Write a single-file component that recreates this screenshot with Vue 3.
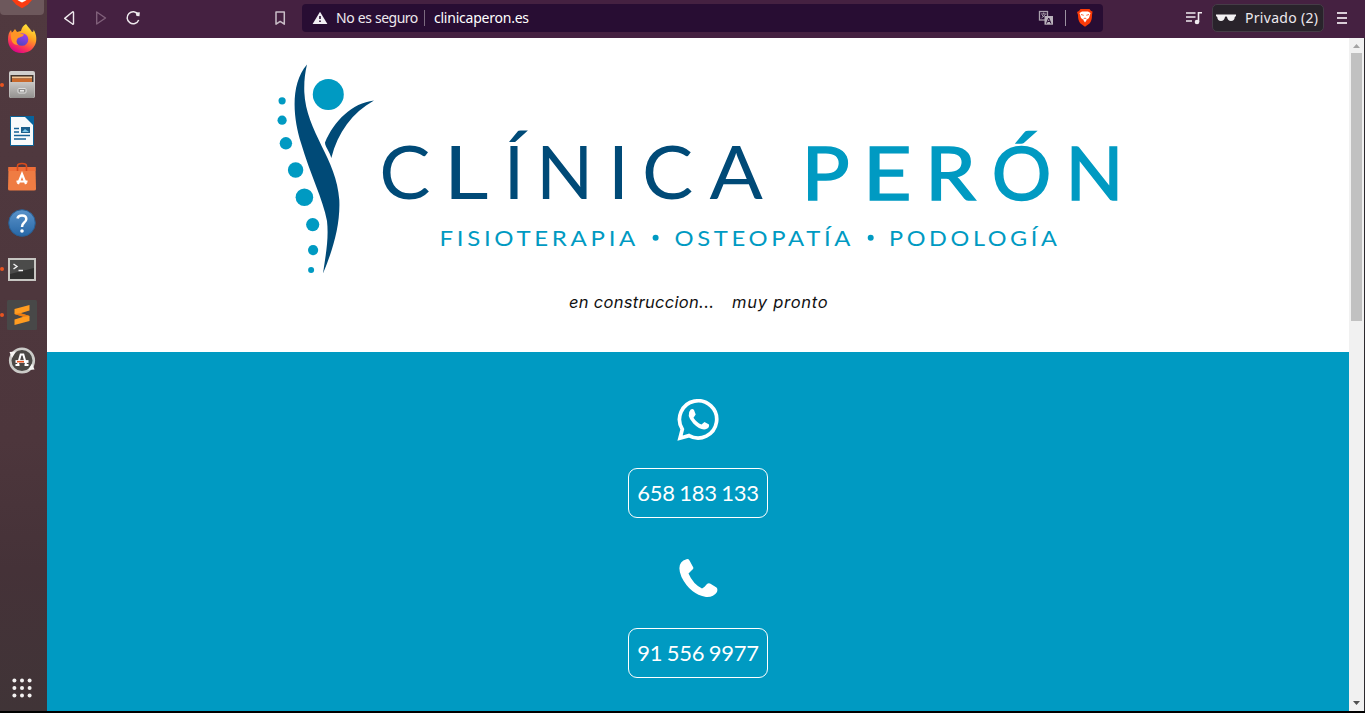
<script setup>
const vertebrae = [
  [282.1, 100.8, 3.6],
  [282.1, 120.2, 4.6],
  [285.9, 143.3, 6.2],
  [295.6, 170, 7.7],
  [304.4, 197.3, 8.8],
  [312.7, 224.6, 6.6],
  [313.1, 250.1, 5.1],
  [311.1, 270, 3],
]
// letter, x, horizontal stretch
const clinica = [
  ['C', 379.2, 1.05],
  ['L', 443.6, 1.2],
  ['Í', 503.7, 1],
  ['N', 536, 1.03],
  ['I', 608.2, 1],
  ['C', 642, 1.05],
  ['A', 709.4, 1.08],
]
const peron = [
  ['P', 801.4, 1.1],
  ['E', 862.7, 1.16],
  ['R', 924.9, 1.11],
  ['Ó', 991.8, 1.02],
  ['N', 1065.5, 1.04],
]
const place = (l, y) => `translate(${l[1]} ${y}) scale(${l[2]} 1)`
const gridDots = [0, 1, 2, 3, 4, 5, 6, 7, 8].map((i) => [14.4 + (i % 3) * 7.6, 15.4 + Math.floor(i / 3) * 7.6])
</script>

<template>
  <div class="desktop">
    <aside class="dock">
      <div class="dock-active">
        <svg width="44" height="16" viewBox="0 0 44 16">
          <path d="M12 0H32L28 4.500L22 8.200L16 4.500Z" fill="#fb3c12" />
          <path d="M17.500 0H26.500L25 1L22 2.600L19 1Z" fill="#fff" />
        </svg>
      </div>
      <!-- Firefox -->
      <svg class="app" viewBox="0 0 44 46">
        <defs>
          <linearGradient id="fox" x1="0.8" y1="0" x2="0.3" y2="1">
            <stop offset="0" stop-color="#fff33f" />
            <stop offset="0.4" stop-color="#ffa321" />
            <stop offset="0.72" stop-color="#ff3f4d" />
            <stop offset="1" stop-color="#d9008d" />
          </linearGradient>
          <linearGradient id="globe" x1="0.7" y1="0" x2="0.3" y2="1">
            <stop offset="0" stop-color="#a13ef0" />
            <stop offset="1" stop-color="#4f45bd" />
          </linearGradient>
        </defs>
        <path d="M26 8C29 12 31 14 32 16Q34 16 33.500 13.500C37 19 37 25 35 29C32 35 27 37 21.500 37C13 37 8 31 8 23.500C8 19 9 16 11 14L12 17L15 13L17 16L21 15Q22 10 26 8Z" fill="url(#fox)" />
        <circle cx="22" cy="23.500" r="6.300" fill="url(#globe)" />
        <path d="M11 17Q15 14 19 17L24 18.500C23 21 20 21 18 22C16 24 16 27 18 29Q10 29 11 17Z" fill="#ff9426" />
      </svg>
      <!-- Files -->
      <svg class="app" viewBox="0 0 44 46">
        <defs>
          <linearGradient id="drawer" x1="0" y1="0" x2="0" y2="1">
            <stop offset="0" stop-color="#c9c7c5" />
            <stop offset="1" stop-color="#93918f" />
          </linearGradient>
        </defs>
        <circle cx="2" cy="23" r="2" fill="#e95420" />
        <rect x="9" y="9" width="26" height="27" rx="2" fill="#d0cecd" />
        <rect x="10.500" y="13" width="23" height="8" fill="#42352e" />
        <rect x="12" y="14.500" width="20" height="2" fill="#f4c696" />
        <rect x="12" y="16.500" width="20" height="3.500" fill="#c9692c" />
        <path d="M9.500 20H34.500V34Q34.500 36 32.500 36H11.500Q9.500 36 9.500 34Z" fill="url(#drawer)" />
        <rect x="18" y="26.500" width="8" height="4.500" rx="1" fill="#8e8c8a" stroke="#dedede" />
        <rect x="20" y="28.200" width="4" height="1.300" fill="#fff" />
      </svg>
      <!-- Writer -->
      <svg class="app" viewBox="0 0 44 46">
        <path d="M10.500 8.500H26L33.500 16V37.500H10.500Z" fill="#f8fafb" stroke="#0b6297" />
        <path d="M24 8H34V18Z" fill="#07639c" />
        <path d="M14 20.500H19M14 24H19M14 27.500H30M14 31H26" stroke="#176397" stroke-width="1.500" />
        <rect x="21" y="19" width="9" height="6" fill="#1b5f8b" />
        <path d="M22 24L25 21L29 24" fill="#7cc4e8" />
      </svg>
      <!-- Software -->
      <svg class="app" viewBox="0 0 44 46">
        <path d="M8.500 13H35.500L36 35Q36 36.500 34 36.500H10Q8 36.500 8 35Z" fill="#ef7c43" />
        <path d="M8.500 13H35.500V17H8.400Z" fill="#ee6e38" />
        <path d="M17.500 17V12Q17.500 9.500 22 9.500T26.500 12V17" fill="none" stroke="#d64b1c" stroke-width="1.600" />
        <path d="M18 30L22 20L26 30M16.500 27.500H27.500" fill="none" stroke="#fff" stroke-width="2.200" />
      </svg>
      <!-- Help -->
      <svg class="app" viewBox="0 0 44 46">
        <defs>
          <linearGradient id="help" x1="0" y1="0" x2="0" y2="1">
            <stop offset="0" stop-color="#5b93ca" />
            <stop offset="1" stop-color="#2767a6" />
          </linearGradient>
        </defs>
        <circle cx="22" cy="23" r="13.300" fill="url(#help)" stroke="#285e93" />
        <path d="M17.500 18.500Q18 15.500 22 15.500Q26.300 15.500 26.300 19Q26.300 21 24 22.800Q22 24.500 22 27" fill="none" stroke="#fff" stroke-width="2.500" />
        <circle cx="22" cy="31" r="1.800" fill="#fff" />
      </svg>
      <!-- Terminal -->
      <svg class="app" viewBox="0 0 44 46">
        <circle cx="2" cy="23" r="2" fill="#e95420" />
        <rect x="9" y="13" width="26" height="21" fill="#30302f" stroke="#c7c6c2" stroke-width="2" />
        <path d="M10 14H34V22L10 28Z" fill="#4b4b4a" />
        <path d="M13.500 18L17 20.500L13.500 23M18.500 24.500H23" fill="none" stroke="#f2f2f2" stroke-width="1.400" />
      </svg>
      <!-- Sublime Text -->
      <svg class="app" viewBox="0 0 44 46">
        <circle cx="2" cy="23" r="2" fill="#e95420" />
        <rect x="7" y="8" width="30" height="30" rx="1.500" fill="#484848" />
        <path d="M14.500 17L29.500 13V18.500L20.500 21.300L29.500 24V29L14.500 33V27.500L23.500 24.800L14.500 22Z" fill="#ff9c20" />
        <path d="M14.500 22L20.500 21.300L29.500 24L23.500 24.800Z" fill="#ec7c10" />
      </svg>
      <!-- Updater -->
      <svg class="app" viewBox="0 0 44 46">
        <circle cx="22" cy="22.500" r="11.800" fill="#4a4845" stroke="#cbcbc8" stroke-width="2.600" />
        <path d="M9.500 14L16 13.500L12 20ZM34.500 31.500L28 32L32 25.500Z" fill="#f5f5f3" />
        <path d="M18 26L20.700 16.500H23.300L26 26M15.500 27H19.500M24.500 27H28.500" fill="none" stroke="#fff" stroke-width="2" />
        <path d="M15.500 23.500H28.500" stroke="#fff" stroke-width="2.800" />
        <path d="M17 23.700H24" stroke="#e95420" stroke-width="1.600" />
      </svg>
      <svg class="app grid-button" viewBox="0 0 44 46">
        <circle v-for="(d, i) in gridDots" :key="i" :cx="d[0]" :cy="d[1]" r="2" fill="#f4f2f2" />
      </svg>
    </aside>

    <div class="browser">
      <header class="toolbar">
        <svg class="nav" width="255" height="38" viewBox="47 0 255 38" fill="none" stroke="#eee9ed" stroke-width="1.400" stroke-linejoin="round">
          <path d="M73.500 12.300V23.700Q73.500 24.500 72.500 24L64.700 18.400L72.500 12Q73.500 11.500 73.500 12.300Z" />
          <path d="M96.700 12V24L105.500 18Z" stroke="#80607a" />
          <path d="M138.200 14.500A6 6 0 1 0 138.700 20" stroke-width="1.500" />
          <path d="M135.500 12.500L139.800 12.200L139.500 16.300L136.500 16Z" fill="#eee9ed" stroke="none" />
          <path d="M276 12H284.300V24.200L280.200 21.400L276 24.200Z" stroke="#c9bdc7" stroke-width="1.500" />
        </svg>
        <div class="address">
          <svg width="16" height="14" viewBox="0 0 16 14">
            <path d="M8 .8L15.400 13H.6Z" fill="#f2eff4" />
            <path d="M8 5V8M8 9.500V11" stroke="#280d33" stroke-width="1.600" />
          </svg>
          <span class="insecure">No es seguro</span>
          <i class="sep"></i>
          <span class="url">clinicaperon.es</span>
          <svg class="address-icons" width="62" height="28" viewBox="1036 4 62 28">
            <rect x="1039.500" y="11.500" width="8" height="8.500" fill="#280d33" stroke="#aaa0ad" stroke-width="1.300" />
            <path d="M1041 14H1046.500M1043.700 12.500V14M1041.500 18L1045.500 14.500M1042 15L1044 17" fill="none" stroke="#aaa0ad" />
            <rect x="1044.500" y="16" width="8.500" height="8.700" fill="#b9b1bb" />
            <path d="M1046.500 23.500L1048.700 18L1051 23.500M1047.500 21.500H1050" fill="none" stroke="#280d33" />
            <path d="M1065.500 10V26" stroke="#9b91a0" />
            <path d="M1080.500 9H1089.500L1091 11L1092.500 11.500L1092 15Q1092 21 1089.500 23.500L1085 26.700L1080.500 23.500Q1078 21 1078 15L1077 12L1079 11Z" fill="#fb3b08" />
            <path d="M1079.500 13L1082 11.500H1088L1090.500 13L1089 18L1087 19.500L1085 22.500L1083 19.500L1081 18Z" fill="#fff" />
            <path d="M1081 14.500L1083.700 15.300M1089 14.500L1086.300 15.300M1083.500 19L1085 18L1086.500 19" fill="none" stroke="#fb3b08" stroke-width="0.800" />
          </svg>
        </div>
        <svg class="playlist" width="18" height="16" viewBox="1185 10 18 16">
          <path d="M1186 13H1195.500M1186 17H1195.500M1186 21H1192" fill="none" stroke="#f0ebef" stroke-width="1.500" />
          <path d="M1198.500 22V12.700H1202" fill="none" stroke="#f0ebef" stroke-width="1.600" />
          <circle cx="1197" cy="22" r="2.300" fill="#f0ebef" />
        </svg>
        <div class="private">
          <svg width="20" height="8" viewBox="0 0 20 8">
            <path d="M0 .5H20V2L18.800 3Q18.500 7 15 7Q11.800 7 11 3L10 2.300L9 3Q8.200 7 5 7Q1.500 7 1.200 3L0 2Z" fill="#f3f1f3" />
          </svg>
          <span>Privado (2)</span>
        </div>
        <svg class="menu" width="10" height="12" viewBox="0 0 10 12">
          <path d="M0 1H10M0 6H10M0 11H10" stroke="#d9ced7" stroke-width="2" />
        </svg>
      </header>

      <div class="viewport">
        <main class="page">
          <section class="hero">
            <svg class="logo" width="900" height="220" viewBox="248 60 900 220">
              <g fill="#009ac2">
                <circle v-for="(v, i) in vertebrae" :key="i" :cx="v[0]" :cy="v[1]" :r="v[2]" />
                <circle cx="328.300" cy="94.500" r="15.500" />
              </g>
              <g fill="#004a77">
                <path d="M307 64.500C290 84 293 118 301 143C310 174 323 199 327 221C329 239 325.500 256 323 273.500C332 252 340.500 226 339.300 200C337 159 306 132 304.300 92C304 81 305 73 307 64.500Z" />
                <path d="M374 100.500C352 103 334 121 325 142.500C325 147 329.500 151 331.300 158C338 132 352 113 374 100.500Z" />
              </g>
              <g class="name dark"><text v-for="(l, i) in clinica" :key="i" :transform="place(l, 199.3)">{{ l[0] }}</text></g>
              <g class="name bright"><text v-for="(l, i) in peron" :key="i" :transform="place(l, 199.5)">{{ l[0] }}</text></g>
              <g class="services">
                <text x="439.500" y="245.500" textLength="199.500" lengthAdjust="spacingAndGlyphs">FISIOTERAPIA</text>
                <text x="674.500" y="245.500" textLength="179.500" lengthAdjust="spacingAndGlyphs">OSTEOPATÍA</text>
                <text x="889" y="245.500" textLength="171.500" lengthAdjust="spacingAndGlyphs">PODOLOGÍA</text>
                <circle cx="655.600" cy="237.700" r="3" />
                <circle cx="870.700" cy="237.700" r="3" />
              </g>
            </svg>
            <p class="notice"><em class="building">en construccion...</em><em class="soon">muy pronto</em></p>
          </section>
          <section class="contact">
            <svg width="42" height="42" viewBox="677 399 42 42">
              <path d="M682.300 429.200A18.600 18.600 0 1 1 689 435.600L680 438.200Z" fill="none" stroke="#fff" stroke-width="3.700" />
              <path d="M690.700 409.500Q692.700 408.300 694 410L695.700 414.500L693.500 417.700Q696.500 422.500 701.500 424.500L704.500 422L709 424.500Q709.800 428 705.500 429.300Q700 430.300 693.300 423.500Q685.500 415 690.700 409.500Z" fill="#fff" />
            </svg>
            <a class="phone">658 183 133</a>
            <svg class="handset" width="42" height="42" viewBox="677 559 42 42">
              <path d="M686.500 559.200Q688.500 558.800 689.500 560.500L693.300 567.500Q693.500 568.700 692.500 569.500L688.500 573.500Q693 584 702 588.500Q704 588 706.500 584.500Q708.500 582.500 710.500 583.700L716.500 587.500Q718 588.700 717 592Q713.500 597.500 706 597Q690 594 681.500 577Q675.500 562.500 686.500 559.200Z" fill="#fff" />
            </svg>
            <a class="phone">91 556 9977</a>
          </section>
        </main>
        <div class="scrollbar">
          <svg width="15" height="15" viewBox="0 0 15 15"><path d="M4 10L7.500 6L11 10Z" fill="#a3a3a3" /></svg>
          <div class="thumb"></div>
          <svg class="down" width="15" height="15" viewBox="0 0 15 15"><path d="M4 5L7.500 9L11 5Z" fill="#505050" /></svg>
        </div>
      </div>
    </div>
  </div>
</template>

<style>
body { margin: 0; overflow: hidden; }
</style>

<style scoped>
.desktop { width: 1365px; height: 713px; display: flex; background: #000; overflow: hidden; }
.desktop svg { display: block; flex: none; }
.dock { width: 47px; height: 711px; flex: none; display: flex; flex-direction: column; background: linear-gradient(#50393f, #4d363c 62%, #453238 80%, #403437); }
.dock-active { width: 44px; height: 15px; margin-bottom: 1px; background: #6d585c; border-radius: 0 0 4px 4px; overflow: hidden; }
.app { width: 44px; height: 46px; }
.grid-button { margin-top: auto; }
.browser { width: 1318px; height: 711px; display: flex; flex-direction: column; background: #2d2a2e; }
.toolbar { height: 38px; flex: none; display: flex; align-items: center; background: #452141; font: 14px/20px "Noto Sans", sans-serif; color: #eee9ee; white-space: nowrap; }
.address { box-sizing: border-box; width: 801px; height: 28px; margin-top: -2px; padding: 0 5px 0 10px; display: flex; align-items: center; background: #280d33; border-radius: 4px; }
.insecure { width: 82px; margin-left: 8px; letter-spacing: -0.5px; word-spacing: 0.5px; }
.sep { width: 1px; height: 16px; margin: 0 9px 0 6px; background: #7b6a80; }
.url { letter-spacing: -0.23px; color: #fff; }
.address-icons { margin-left: auto; }
.playlist { margin: -2px 0 0 82px; }
.private { box-sizing: border-box; width: 112px; height: 28px; margin: -2px 0 0 9px; padding-left: 3px; display: flex; align-items: center; background: #29232b; border: 1px solid #453c47; border-radius: 5px; }
.private span { margin-left: 9px; letter-spacing: 0.3px; }
.menu { margin: -2px 0 0 13px; }
.viewport { height: 673px; display: flex; }
.page { width: 1302px; }
.hero { height: 314px; background: #fff; display: flex; flex-direction: column; align-items: center; padding-top: 22px; box-sizing: border-box; }
.name { font: 400 73px "Lato", sans-serif; }
.dark { fill: #004a77; }
.bright { fill: #009ac2; stroke: #009ac2; stroke-width: 1.5px; }
.services { font: 400 21.5px "Lato", sans-serif; letter-spacing: 3.3px; fill: #009ac2; }
.notice { display: flex; gap: 17px; margin: 10px 0 0; padding-left: 2px; font: italic 16.5px/24px "Inter", sans-serif; color: #111; white-space: pre; }
.building { width: 146px; letter-spacing: 0.3px; }
.soon { width: 97px; letter-spacing: 0.75px; }
.contact { box-sizing: border-box; height: 359px; padding-top: 47px; display: flex; flex-direction: column; align-items: center; background: #009ac2; }
.phone { box-sizing: border-box; width: 140px; height: 50px; margin-top: 27px; border: 1px solid #fff; border-radius: 9px; color: #fff; font: 22px/48px "Lato", sans-serif; letter-spacing: -0.3px; word-spacing: -0.7px; text-align: center; white-space: nowrap; }
.handset { margin-top: 41px; }
.scrollbar { width: 15px; height: 673px; display: flex; flex-direction: column; align-items: center; background: #f1f1f1; }
.thumb { width: 11px; height: 268px; background: #c1c1c1; }
.down { margin-top: auto; }
</style>
